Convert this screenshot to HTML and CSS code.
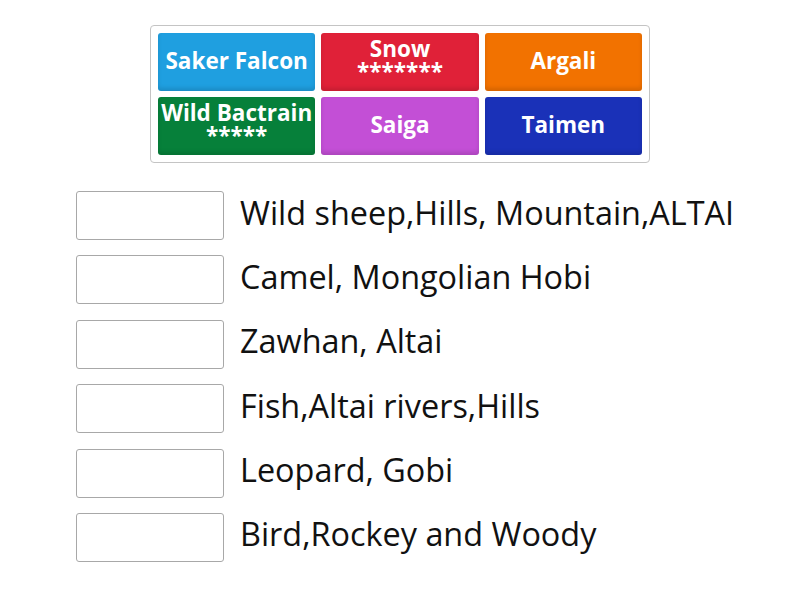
FILE: index.html
```html
<!DOCTYPE html>
<html lang="en">
<head>
    <meta charset="UTF-8">
    <meta name="viewport" content="width=device-width, initial-scale=1.0">
    <title>Match up</title>
    <link rel="stylesheet" href="styles.css">
</head>
<body>
    <!-- Answer tiles -->
    <div class="tiles">
        <div class="tile blue">Saker Falcon</div>
        <div class="tile red">Snow<br>*******</div>
        <div class="tile orange">Argali</div>
        <div class="tile green">Wild Bactrain<br>*****</div>
        <div class="tile purple">Saiga</div>
        <div class="tile navy">Taimen</div>
    </div>

    <!-- Drop rows -->
    <div class="rows">
        <div class="row"><div class="slot"></div><span class="clue">Wild sheep,Hills, Mountain,ALTAI</span></div>
        <div class="row"><div class="slot"></div><span class="clue">Camel, Mongolian Hobi</span></div>
        <div class="row"><div class="slot"></div><span class="clue">Zawhan, Altai</span></div>
        <div class="row"><div class="slot"></div><span class="clue">Fish,Altai rivers,Hills</span></div>
        <div class="row"><div class="slot"></div><span class="clue">Leopard, Gobi</span></div>
        <div class="row"><div class="slot"></div><span class="clue">Bird,Rockey and Woody</span></div>
    </div>
</body>
</html>
```

FILE: styles.css
```css
body {
    font-family: "Open Sans", sans-serif;
    margin: 0;
    padding: 0;
    background: #fff;
    color: #111;
}
.tiles {
    width: 500px;
    box-sizing: border-box;
    margin: 25px auto 0;
    padding: 7px;
    border: 1px solid #c4c4c4;
    border-radius: 4px;
    display: grid;
    grid-template-columns: repeat(3, 1fr);
    gap: 6px;
}
.tile {
    height: 58px;
    box-sizing: border-box;
    padding-bottom: 4px;
    border-radius: 3px;
    color: #fff;
    font-weight: bold;
    font-size: 22.5px;
    line-height: 23px;
    display: flex;
    align-items: center;
    justify-content: center;
    text-align: center;
    box-shadow: inset 0 -3px 4px rgba(0, 0, 0, 0.12);
}
.blue { background: #1f9fe0; }
.red { background: #e02138; }
.orange { background: #f27200; }
.green { background: #06803a; }
.purple { background: #c34fd6; }
.navy { background: #1a31b8; }
.rows {
    margin: 28px 0 0 76px;
    display: flex;
    flex-direction: column;
    gap: 15.4px;
}
.row {
    display: flex;
    align-items: center;
    gap: 16px;
}
.slot {
    width: 148px;
    height: 49px;
    box-sizing: border-box;
    border: 1px solid #a8a8a8;
    border-radius: 3px;
    background: #fff;
}
.clue {
    font-size: 32.4px;
    line-height: 40px;
    margin-top: -8px;
}
```
